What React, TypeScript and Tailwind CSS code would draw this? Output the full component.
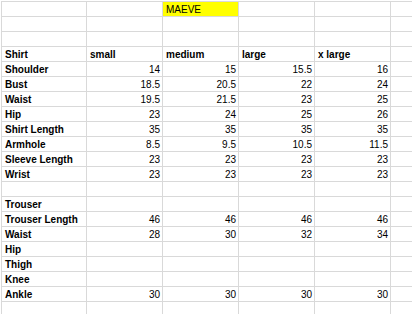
type Row = { label?: string; values?: (string | number)[]; header?: boolean; maeve?: boolean }

const rows: Row[] = [
  { maeve: true },
  {},
  {},
  { label: 'Shirt', values: ['small', 'medium', 'large', 'x large'], header: true },
  { label: 'Shoulder', values: [14, 15, 15.5, 16] },
  { label: 'Bust', values: [18.5, 20.5, 22, 24] },
  { label: 'Waist', values: [19.5, 21.5, 23, 25] },
  { label: 'Hip', values: [23, 24, 25, 26] },
  { label: 'Shirt Length', values: [35, 35, 35, 35] },
  { label: 'Armhole', values: [8.5, 9.5, 10.5, 11.5] },
  { label: 'Sleeve Length', values: [23, 23, 23, 23] },
  { label: 'Wrist', values: [23, 23, 23, 23] },
  {},
  { label: 'Trouser' },
  { label: 'Trouser Length', values: [46, 46, 46, 46] },
  { label: 'Waist', values: [28, 30, 32, 34] },
  { label: 'Hip' },
  { label: 'Thigh' },
  { label: 'Knee' },
  { label: 'Ankle', values: [30, 30, 30, 30] },
  {},
]

const cell = 'flex h-[15px] items-end overflow-hidden whitespace-nowrap border-b border-[#d9d9d9] leading-[12px]'

export default function App() {
  return (
    <div
      className="h-[314px] w-[412px] overflow-hidden bg-white pl-[1px] pt-[1px] text-[10px] text-black"
      style={{ fontFamily: '"Liberation Sans", Arial, sans-serif' }}
    >
      <div className="grid grid-cols-[85px_76px_76px_76px_76px_1fr] border-l border-t border-[#d9d9d9]">
        {rows.map((row, i) => (
          <div key={i} className="contents">
            <div className={`${cell} border-r pl-[3px] font-bold`}>{row.label}</div>
            {[0, 1, 2, 3].map((j) => {
              const v = row.values?.[j]
              if (row.maeve && j === 1) {
                return (
                  <div key={j} className={`${cell} border-r bg-[#ffff00] pl-[3px]`}>
                    MAEVE
                  </div>
                )
              }
              if (row.header) {
                return (
                  <div key={j} className={`${cell} border-r pl-[3px] font-bold`}>
                    {v}
                  </div>
                )
              }
              return (
                <div key={j} className={`${cell} justify-end border-r pr-[2px]`}>
                  {v}
                </div>
              )
            })}
            <div className={cell} />
          </div>
        ))}
      </div>
    </div>
  )
}
